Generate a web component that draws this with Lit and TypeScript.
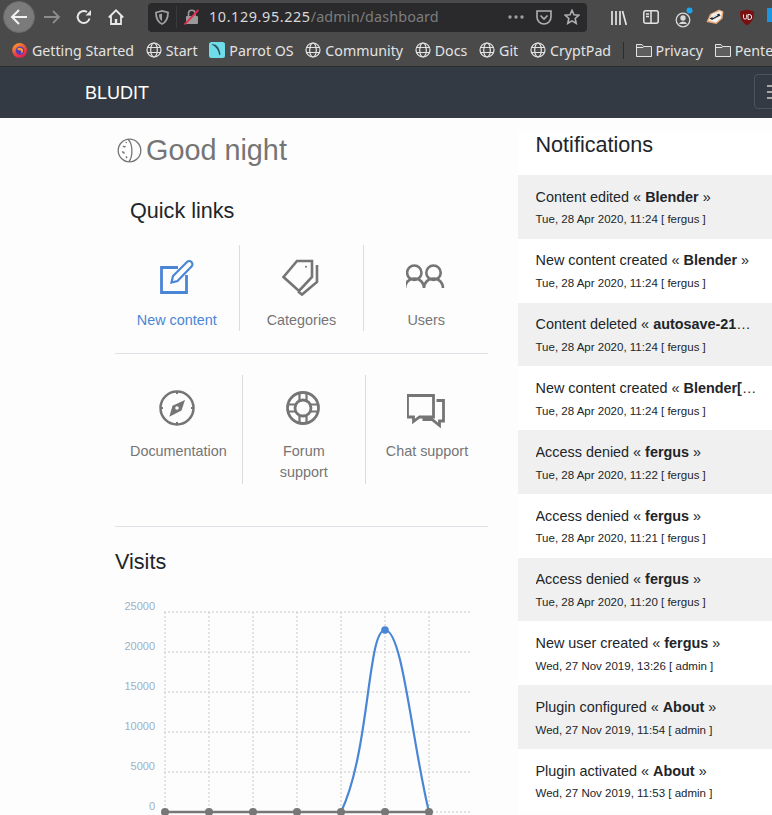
import { LitElement, html, css, svg } from "lit";
import { customElement } from "lit/decorators.js";

const globe = html`<svg class="bi" viewBox="0 0 16 16" fill="none" stroke="#e3e3e3" stroke-width="1.2"><circle cx="8" cy="8" r="7"/><ellipse cx="8" cy="8" rx="3.3" ry="7"/><path d="M1.5 5.5h13M1.5 10.5h13"/></svg>`;
const folder = html`<svg class="bi" viewBox="0 0 16 16" fill="#5e5e5e" stroke="#e3e3e3" stroke-width="1"><path d="M.5 14.5V2.5h5.5l1.5 2h8v10z"/><path d="M.5 5.5h6.5l1-1" fill="none"/></svg>`;
const firefox = html`<svg class="bi" viewBox="0 0 16 16"><defs><linearGradient id="ff" x1="0" y1="0" x2="0.6" y2="1"><stop offset="0" stop-color="#ffb02e"/><stop offset=".55" stop-color="#f0523a"/><stop offset="1" stop-color="#e3205a"/></linearGradient></defs><circle cx="7.6" cy="8.4" r="7.4" fill="url(#ff)"/><circle cx="8" cy="8.6" r="4.2" fill="#4a3bc0"/><path d="M5.2 7c1.4-2 5-1.6 5.8.8.6 2-.9 3.8-2.8 3.9 1.5-.8 1.8-2.6.4-3.2-1.3-.5-2.8 0-3.4-1.5z" fill="#ff9a2e"/></svg>`;
const parrot = html`<svg class="bi" viewBox="0 0 16 16"><rect width="16" height="16" rx="2.5" fill="#6fdcea"/><path d="M2.5 2.5c4-.8 7.500 1.500 9 9.500l-1.200 1.500C9.500 8.500 7.500 5 2.500 2.500z" fill="#2d5560"/></svg>`;

const marks = [
  { icon: firefox, text: "Getting Started" },
  { icon: globe, text: "Start" },
  { icon: parrot, text: "Parrot OS" },
  { icon: globe, text: "Community" },
  { icon: globe, text: "Docs" },
  { icon: globe, text: "Git" },
  { icon: globe, text: "CryptPad" },
];

const notes = [
  ["Content edited", "Blender", "Tue, 28 Apr 2020, 11:24", "fergus"],
  ["New content created", "Blender", "Tue, 28 Apr 2020, 11:24", "fergus"],
  ["Content deleted", "autosave-2144b1e09d3c", "Tue, 28 Apr 2020, 11:24", "fergus"],
  ["New content created", "Blender[1]", "Tue, 28 Apr 2020, 11:24", "fergus"],
  ["Access denied", "fergus", "Tue, 28 Apr 2020, 11:22", "fergus"],
  ["Access denied", "fergus", "Tue, 28 Apr 2020, 11:21", "fergus"],
  ["Access denied", "fergus", "Tue, 28 Apr 2020, 11:20", "fergus"],
  ["New user created", "fergus", "Wed, 27 Nov 2019, 13:26", "admin"],
  ["Plugin configured", "About", "Wed, 27 Nov 2019, 11:54", "admin"],
  ["Plugin activated", "About", "Wed, 27 Nov 2019, 11:53", "admin"],
];

const iconNew = html`<svg class="qi" viewBox="0 0 40 40" fill="none" stroke="currentColor" stroke-width="2.800"><path d="M29.500 18V35.500H4.500V10.500H21"/><path d="M14.500 25.500L16 19 30 5a3.100 3.100 0 0 1 4.500 4.500L20.500 24z" stroke-width="2.200"/></svg>`;
const iconTag = html`<svg class="qi" viewBox="1 0 40 40" fill="none" stroke="currentColor" stroke-width="2.600"><path d="M2.500 20L16 4H31V20L18 34z"/><path d="M36 8V25L21 37.500 17 34.500"/><circle cx="25" cy="9.700" r="1" fill="currentColor" stroke="none"/></svg>`;
const iconUsers = html`<svg class="qi" viewBox="2 0 40 40" fill="none" stroke="currentColor" stroke-width="2.600"><circle cx="10.300" cy="15.700" r="7.200"/><circle cx="29.500" cy="15.700" r="7.200"/><path d="M1 31a9.500 9.500 0 0 1 19 0a9.500 9.500 0 0 1 19 0"/></svg>`;
const iconCompass = html`<svg class="qi" viewBox="1 0 40 40" fill="none" stroke="currentColor" stroke-width="2.500"><circle cx="20" cy="20" r="16.500"/><path d="M20 3.500v2.500M20 34v2.500M3.500 20H6M34 20h2.500" stroke-width="2"/><path d="M28 12L15.500 17.800 12.300 28.700 24.500 22.500z" fill="currentColor" stroke="none"/><circle cx="20" cy="20" r="1.800" fill="#fdfdfd" stroke="none"/></svg>`;
const iconBuoy = html`<svg class="qi" viewBox="1 0 40 40" fill="none" stroke="currentColor" stroke-width="2.800"><circle cx="20" cy="20" r="15.500"/><circle cx="20" cy="20" r="8"/><path d="M16.500 5v7.500M23.500 5v7.500M16.500 27.500V35M23.500 27.500V35M5 16.500h7.500M5 23.500h7.500M27.500 16.500H35M27.500 23.500H35" stroke-width="2.200"/></svg>`;
const iconChat = html`<svg class="qi" viewBox="1.500 0 40 40" fill="none" stroke="currentColor" stroke-width="2.800"><path d="M2 7.500H28V29H14L8 33.500V29H2z"/><path d="M31 12.500H38V33H34V37.500L26.500 31.500H17"/></svg>`;

const row1 = [
  { icon: iconNew, text: "New content", active: true },
  { icon: iconTag, text: "Categories", active: false },
  { icon: iconUsers, text: "Users", active: false },
];
const row2 = [
  { icon: iconCompass, text: "Documentation", active: false },
  { icon: iconBuoy, text: "Forum support", active: false },
  { icon: iconChat, text: "Chat support", active: false },
];

const X = [50, 94, 138, 182, 226, 270, 314];
const Y = [17, 57, 97, 137, 177, 217];
const LABELS = ["25000", "20000", "15000", "10000", "5000", "0"];

function chart() {
  return html`<svg class="chart" width="373" height="220" viewBox="0 0 373 220">
    ${Y.map((y) => svg`<line x1="49" x2="356" y1=${y} y2=${y} stroke="#c9c9c9" stroke-width="1" stroke-dasharray="2 2"/>`)}
    ${X.map((x) => svg`<line x1=${x} x2=${x} y1="17" y2="220" stroke="#c9c9c9" stroke-width="1" stroke-dasharray="2 2"/>`)}
    ${Y.map((y, i) => svg`<text x="40" y=${y - 2.5} text-anchor="end" class="lbl">${LABELS[i]}</text>`)}
    <path d="M226 217C254.900 157 252.400 35 270 35C287.600 35 296.400 144.200 314 217" fill="none" stroke="#4a86d6" stroke-width="2.200"/>
    <circle cx="270" cy="35" r="3.800" fill="#4a86d6"/>
    <path d="M50 217H314" stroke="#777" stroke-width="2.400"/>
    ${X.map((x) => svg`<circle cx=${x} cy="217" r="4" fill="#777"/>`)}
  </svg>`;
}

@customElement("app-root")
export class AppRoot extends LitElement {
  static styles = css`
    :host { display: block; width: 772px; height: 815px; overflow: hidden; background: #fdfdfd; font-family: "Liberation Sans", Arial, sans-serif; font-size: 14.4px; line-height: 1.5; color: #212529; }
    .toolbar { height: 34px; background: #4a4a4a; display: flex; align-items: center; color: #e6e6e6; font-family: "Noto Sans", sans-serif; white-space: nowrap; overflow: hidden; }
    .toolbar svg { flex: none; display: block; }
    .back { width: 32px; height: 32px; margin-left: 3px; border-radius: 50%; background: #7b7b7b; border: 1px solid #6a6a6a; box-sizing: border-box; display: flex; align-items: center; justify-content: center; flex: none; }
    .t-fwd { margin-left: 8px; }
    .t-rel { margin-left: 15px; }
    .t-home { margin-left: 16px; }
    .url { width: 439px; height: 29px; margin-left: 24px; background: #2a2a2c; border-radius: 4px; display: flex; align-items: center; flex: none; padding: 0 7px; box-sizing: border-box; }
    .url .div { width: 1px; height: 22px; background: #3a3a3c; margin: 0 7px 0 7px; }
    .url .addr { font-size: 14.400px; letter-spacing: .6px; margin-left: 10px; color: #d8d8d8; flex: 1; }
    .url .addr span { color: #7d7d7d; letter-spacing: .1px; }
    .t-pocket { margin-left: 12px; }
    .t-star { margin-left: 12px; }
    .t-lib { margin-left: 24px; }
    .t-side { margin-left: 16px; }
    .t-acct { margin-left: 16px; }
    .t-badger { margin-left: 12px; }
    .t-ub { margin-left: 15px; }
    .t-blue { margin-left: 12px; margin-bottom: 4px; }
    .marks { height: 31px; padding-top: 1px; background: #4a4a4a; border-bottom: 1px solid #2c2c2e; display: flex; align-items: center; padding-left: 12px; gap: 11.750px; color: #e3e3e3; font-family: "Noto Sans", sans-serif; font-size: 14.200px; white-space: nowrap; overflow: hidden; }
    .mk { display: flex; align-items: center; gap: 4px; flex: none; }
    .bi { width: 16px; height: 16px; flex: none; display: block; }
    .sep { width: 1px; height: 17px; background: #2c2c2e; flex: none; }
    .nav { height: 51px; background: #343a44; display: flex; align-items: center; justify-content: space-between; padding-left: 85px; color: #fff; }
    .brand { font-size: 18px; padding-top: 2px; }
    .burger { width: 48px; height: 35px; margin-right: -30px; margin-bottom: 2px; border: 1px solid #4d535c; border-radius: 4px; box-sizing: border-box; display: flex; align-items: center; padding-left: 12px; flex: none; }
    .main { display: flex; padding-left: 115px; gap: 30px; align-items: flex-start; }
    .left { width: 373px; flex: none; padding-top: 15px; }
    .right { flex: 1; min-width: 0; margin-top: 14px; background: #fff; }
    h2 { margin: 0; font-weight: 400; }
    .greet { display: flex; align-items: center; gap: 4px; margin-left: 2px; font-size: 28.800px; line-height: 34.600px; color: #757575; }
    .greet svg { width: 25px; height: 25px; flex: none; }
    .ql { font-size: 21.600px; line-height: 26px; margin: 30px 0 21px 15px; }
    .row { display: flex; }
    .cell { flex: 1 1 0; padding: 0 15px; border-right: 1px solid #dcdcdc; color: #757575; text-align: center; }
    .cell:last-child { border-right: 0; }
    .cell.on { color: #4a86d6; }
    .ib { height: 65px; display: flex; align-items: center; justify-content: center; }
    .row.tall .ib { height: 65.500px; }
    .qi { width: 40px; height: 40px; display: block; }
    hr { border: 0; border-top: 1px solid #dee2e6; margin: 0; }
    .h1 { margin-top: 22px; margin-bottom: 21px; }
    .h2 { margin-top: 42px; }
    .visits { font-size: 21.600px; line-height: 26px; margin-top: 22px; margin-bottom: 20px; }
    .chart { display: block; margin-top: 0; }
    .lbl { font-family: "Liberation Sans", sans-serif; font-size: 11px; fill: #9fb0c4; }
    .nt { font-size: 21.600px; line-height: 26px; padding: 0 0 0 17.500px; height: 43px; color: #212529; }
    .n { height: 63.790px; box-sizing: border-box; padding: 10.610px 14px 0 17.500px; }
    .n:nth-child(odd) { background: #f0f0f0; }
    .n .ti { white-space: nowrap; overflow: hidden; text-overflow: ellipsis; line-height: 22px; margin-bottom: .8px; }
    .n .dt { font-size: 11.520px; line-height: 22px; }
  `;

  cell(c: { icon: unknown; text: string; active: boolean }) {
    return html`<div class="cell ${c.active ? "on" : ""}"><div class="ib">${c.icon}</div><div>${c.text}</div></div>`;
  }

  render() {
    return html`
      <div class="toolbar">
        <div class="back"><svg width="20" height="20" viewBox="0 0 20 20" fill="none" stroke="#f2f2f2" stroke-width="2"><path d="M18 10H3M10 3l-7 7 7 7"/></svg></div>
        <svg class="t-fwd" width="18" height="18" viewBox="0 0 18 18" fill="none" stroke="#8c8c8c" stroke-width="1.800"><path d="M1 9H16M10 3l6 6-6 6"/></svg>
        <svg class="t-rel" width="16" height="16" viewBox="0 0 16 16" fill="none" stroke="#e8e8e8" stroke-width="2"><path d="M13.500 9.500A6 6 0 1 1 11 3"/><path d="M15 1v5.500H9.500z" fill="#e8e8e8" stroke="none"/></svg>
        <svg class="t-home" width="16" height="16" viewBox="0 0 16 16" fill="none" stroke="#e8e8e8" stroke-width="1.800"><path d="M.8 8.500L8 1.300l7.200 7.200M3 7v8h10V7"/><rect x="6.800" y="10" width="2.400" height="5" fill="#e8e8e8" stroke="none"/></svg>
        <div class="url">
          <svg width="14" height="15" viewBox="0 0 14 15" fill="none" stroke="#a0a0a0" stroke-width="1.800"><path d="M1 2.500L7 1l6 1.500c0 6-1.500 9.500-6 11.500C2.500 12 1 8.500 1 2.500z"/><path d="M7 3.500v7.500c-2-1.200-3-3-3-6.500z" fill="#a0a0a0" stroke="none"/></svg>
          <div class="div"></div>
          <svg width="15" height="16" viewBox="0 0 15 16"><rect x="2" y="7" width="12" height="8" rx="1" fill="#9a9a9a"/><path d="M4.500 7V4.500a3.300 3.300 0 0 1 6.600 0V7" fill="none" stroke="#9a9a9a" stroke-width="1.600"/><path d="M.5 15.500L14.500 1" stroke="#e8294e" stroke-width="1.800"/></svg>
          <div class="addr">10.129.95.225<span>/admin/dashboard</span></div>
          <svg width="16" height="4" viewBox="0 0 16 4" fill="#a0a0a0"><circle cx="2" cy="2" r="1.700"/><circle cx="8" cy="2" r="1.700"/><circle cx="14" cy="2" r="1.700"/></svg>
          <svg class="t-pocket" width="16" height="16" viewBox="0 0 16 16" fill="none" stroke="#b0b0b0" stroke-width="1.600"><path d="M1 2h14v6a7 7 0 0 1-14 0z"/><path d="M4.500 6.500L8 10l3.500-3.500"/></svg>
          <svg class="t-star" width="16" height="16" viewBox="0 0 16 16" fill="none" stroke="#b0b0b0" stroke-width="1.600"><path d="M8 1.300l2 4.500 4.800.5-3.600 3.200 1 4.800L8 11.900 3.800 14.300l1-4.800L1.200 6.300 6 5.800z"/></svg>
        </div>
        <svg class="t-lib" width="16" height="15" viewBox="0 0 16 15" fill="none" stroke="#e4e4e4" stroke-width="1.700"><path d="M1 1v14M5 1v14M9 1v14M11.500 1l3.800 14"/></svg>
        <svg class="t-side" width="16" height="14" viewBox="0 0 16 14" fill="none" stroke="#e4e4e4" stroke-width="1.500"><rect x=".8" y=".8" width="14.400" height="12.400" rx="2"/><path d="M8 1v12M3 4h3M3 6.500h3" /></svg>
        <svg class="t-acct" width="19" height="22" viewBox="0 0 19 22"><circle cx="8" cy="14" r="6.800" fill="none" stroke="#d8d8d8" stroke-width="1.300"/><circle cx="8" cy="12" r="2.700" fill="#d8d8d8"/><path d="M3.800 18a4.500 4 0 0 1 8.400 0z" fill="#d8d8d8"/><circle cx="14.500" cy="4.500" r="3" fill="#1ba5f0"/></svg>
        <svg class="t-badger" width="18" height="16" viewBox="0 0 18 16"><path d="M.5 13L4 5l9-4.500 4.500 2-1 7-6 5.500z" fill="#e8a878"/><path d="M2.500 11.500L6 5l8-3 2 1-1 6-5 4.500z" fill="#f4f4f4"/><path d="M3.500 9.500L13 4.500l1.500 2L6 11z" fill="#2c2c2c"/><path d="M6 8l5-2.500.5 1L7 9z" fill="#f4f4f4"/></svg>
        <svg class="t-ub" width="16" height="17" viewBox="0 0 16 17"><path d="M1 2.500L8 .5l7 2c0 7-2 11-7 14-5-3-7-7-7-14z" fill="#7a0f10"/><path d="M4.500 5.500v3a1.600 1.600 0 0 0 3.200 0v-3M9 5.500v5h1.200a2.500 2.500 0 0 0 0-5z" fill="none" stroke="#f1f1f1" stroke-width="1"/></svg>
        <svg class="t-blue" width="16" height="14" viewBox="0 0 16 14"><rect width="16" height="14" fill="#1b95e0"/></svg>
      </div>
      <div class="marks">
        ${marks.map((m) => html`<div class="mk">${m.icon}<span>${m.text}</span></div>`)}
        <div class="sep"></div>
        <div class="mk">${folder}<span>Privacy</span></div>
        <div class="mk">${folder}<span>Pentesting</span></div>
      </div>
      <div class="nav">
        <div class="brand">BLUDIT</div>
        <div class="burger"><svg width="20" height="16" viewBox="0 0 20 16" stroke="#a8a8a8" stroke-width="2"><path d="M0 2h20M0 8h20M0 14h20"/></svg></div>
      </div>
      <div class="main">
        <div class="left">
          <h2 class="greet">
            <svg viewBox="0 0 25 25" fill="none" stroke="currentColor" stroke-width="1.300"><circle cx="12.500" cy="12.500" r="11.300"/><path d="M11 1.500c5 4 5 17 1 22"/><path d="M6 8c1 1 2 1 2.500.3M5 14c1.500-.3 2 .7 2 1.700M9 18.500l1 1.500M9 5l.5-1" stroke-width="1.500"/></svg>
            <span>Good night</span>
          </h2>
          <h2 class="ql">Quick links</h2>
          <div class="row">${row1.map((c) => this.cell(c))}</div>
          <hr class="h1" />
          <div class="row tall">${row2.map((c) => this.cell(c))}</div>
          <hr class="h2" />
          <h2 class="visits">Visits</h2>
          ${chart()}
        </div>
        <div class="right">
          <h2 class="nt">Notifications</h2>
          <div>
            ${notes.map((n) => html`<div class="n"><div class="ti">${n[0]} « <b>${n[1]}</b> »</div><div class="dt">${n[2]} [ ${n[3]} ]</div></div>`)}
          </div>
        </div>
      </div>
    `;
  }
}
